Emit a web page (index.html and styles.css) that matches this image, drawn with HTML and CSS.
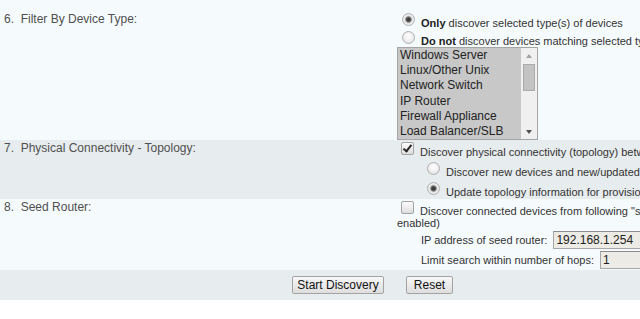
FILE: index.html
```html
<!DOCTYPE html>
<html>
<head>
<meta charset="utf-8">
<title>Discovery</title>
<link rel="stylesheet" href="styles.css">
</head>
<body>
<div class="viewport">
  <form class="form">
    <div class="row light row-filter">
      <div class="label label-first">6.&nbsp; Filter By Device Type:</div>
      <div class="field field-filter">
        <div class="opt opt-a"><input type="radio" class="radio on" name="f" checked> <b>Only</b> discover selected type(s) of devices</div>
        <div class="opt opt-b"><input type="radio" class="radio" name="f"> <b>Do not</b> discover devices matching selected type(s)</div>
        <div class="listbox">
          <div class="items">
            <div>Windows Server</div>
            <div>Linux/Other Unix</div>
            <div>Network Switch</div>
            <div>IP Router</div>
            <div>Firewall Appliance</div>
            <div>Load Balancer/SLB</div>
          </div>
          <div class="scroll">
            <div class="arrow"><span class="tri-up"></span></div>
            <div class="thumb"></div>
            <div class="track"></div>
            <div class="arrow"><span class="tri-down"></span></div>
          </div>
        </div>
      </div>
    </div>

    <div class="row shade row-topo">
      <div class="label">7.&nbsp; Physical Connectivity - Topology:</div>
      <div class="field">
        <div class="line"><input type="checkbox" class="check on" checked> Discover physical connectivity (topology) between devices</div>
        <div class="line sub"><input type="radio" class="radio" name="t"> Discover new devices and new/updated topology information</div>
        <div class="line sub last"><input type="radio" class="radio on" name="t" checked> Update topology information for provisioned devices only</div>
      </div>
    </div>

    <div class="row light row-seed">
      <div class="label">8.&nbsp; Seed Router:</div>
      <div class="field">
        <div class="line seed-first"><input type="checkbox" class="check"> Discover connected devices from following "seed router" (device must have SNMP and CDP/LLDP</div>
        <div class="wrapline">enabled)</div>
        <div class="inline-field"><span>IP address of seed router:</span><input type="text" class="text" value="192.168.1.254"></div>
        <div class="inline-field"><span>Limit search within number of hops:</span><input type="text" class="text" value="1"></div>
      </div>
    </div>

    <div class="actions">
      <button type="button" class="btn btn-start">Start Discovery</button>
      <button type="button" class="btn btn-reset">Reset</button>
    </div>
  </form>
</div>
</body>
</html>
```

FILE: styles.css
```css
html, body {
  margin: 0;
  padding: 0;
  background: #ffffff;
}

body {
  font-family: "Liberation Sans", Arial, sans-serif;
}

.viewport {
  width: 640px;
  overflow: hidden;
}

.form {
  width: 745px;
  margin: 0;
}

.row {
  display: grid;
  grid-template-columns: 397px 1fr;
}

.light { background: #f5fafd; }
.shade { background: #e7ecee; }

.row-filter { height: 140px; }
.row-topo { height: 59px; }
.row-seed { height: 71px; }

.label {
  padding: 1px 0 0 4px;
  font-size: 12px;
  line-height: 14px;
  color: #505050;
}

.label-first { padding-top: 12px; }

.field {
  font-size: 11px;
  color: #333;
  white-space: nowrap;
  overflow: hidden;
  padding-top: 2px;
}

.field-filter { padding-top: 14px; }

.opt { line-height: 18px; }
.opt-a { height: 18px; }
.opt-b { height: 15px; }
.opt b { color: #222; }

/* radio & checkbox */
.radio, .check {
  -webkit-appearance: none;
  appearance: none;
  box-sizing: border-box;
  width: 13px;
  height: 13px;
  vertical-align: 1px;
  outline: none;
}

.radio {
  margin: -3px 3px 0 5px;
  border-radius: 50%;
  border: 1px solid #b0b0b0;
  background: radial-gradient(circle at 50% 40%, #ffffff 0, #f3f3f3 40%, #d9d9d9 100%);
}

.radio.on {
  background: radial-gradient(circle at 50% 50%, #383838 0, #444444 1.8px, #8a8a8a 2.8px, #d6d6d6 3.6px, #efefef 4.5px, #dadada 100%);
}

.check {
  position: relative;
  margin: -3px 3px 0 4px;
  border: 1px solid #a2a2a2;
  border-radius: 2px;
  background: linear-gradient(#fbfbfb, #dedede);
}

.check.on::after {
  content: "";
  position: absolute;
  left: 3px;
  top: 0px;
  width: 3px;
  height: 7px;
  border: solid #262626;
  border-width: 0 2px 2px 0;
  transform: rotate(38deg);
}

/* listbox */
.listbox {
  display: flex;
  box-sizing: border-box;
  width: 141px;
  height: 93px;
  border: 1px solid #a5a5a5;
  background: #c8c8c8;
}

.items {
  flex: 1;
  overflow: hidden;
  padding-left: 2px;
  font-size: 12px;
  line-height: 15.2px;
  color: #222;
}

.scroll {
  width: 16px;
  background: #f0f0f0;
  display: flex;
  flex-direction: column;
  align-items: center;
}

.arrow {
  height: 15px;
  width: 100%;
  display: flex;
  align-items: center;
  justify-content: center;
}

.tri-up {
  width: 0;
  height: 0;
  border-left: 3.5px solid transparent;
  border-right: 3.5px solid transparent;
  border-bottom: 4px solid #a3a3a3;
}

.tri-down {
  width: 0;
  height: 0;
  border-left: 3.5px solid transparent;
  border-right: 3.5px solid transparent;
  border-top: 4px solid #505050;
}

.thumb {
  box-sizing: border-box;
  width: 12px;
  height: 27px;
  margin-top: 1px;
  background: #c3c3c3;
  border: 1px solid #ababab;
}

.track { flex: 1; }

/* topology / seed lines */
.line {
  height: 20px;
  line-height: 20px;
}

.line.last { height: 17px; }
.line.sub { padding-left: 25px; }
.line.seed-first { height: 16px; }

.wrapline {
  height: 13px;
  line-height: 13px;
}

.inline-field {
  display: flex;
  align-items: center;
  gap: 6px;
  height: 20px;
  padding-left: 24px;
}

.text {
  box-sizing: border-box;
  height: 18px;
  width: 130px;
  margin: 0;
  padding: 0 2px;
  border: 1px solid #a7a7a7;
  border-top-color: #8e8e8e;
  background: #edebe5;
  font-family: "Liberation Sans", Arial, sans-serif;
  font-size: 12px;
  color: #222;
}

/* actions */
.actions {
  height: 30px;
  background: #e7ecee;
  display: flex;
  align-items: center;
  justify-content: center;
  gap: 22px;
}

.btn {
  box-sizing: border-box;
  height: 18px;
  padding: 0;
  margin: 0;
  border: 1px solid #a3a3a3;
  border-radius: 2px;
  background: linear-gradient(#f7f7f7, #dedede);
  font-family: "Liberation Sans", Arial, sans-serif;
  font-size: 12px;
  color: #111;
}

.btn-start { width: 92px; }
.btn-reset { width: 47px; }
```
